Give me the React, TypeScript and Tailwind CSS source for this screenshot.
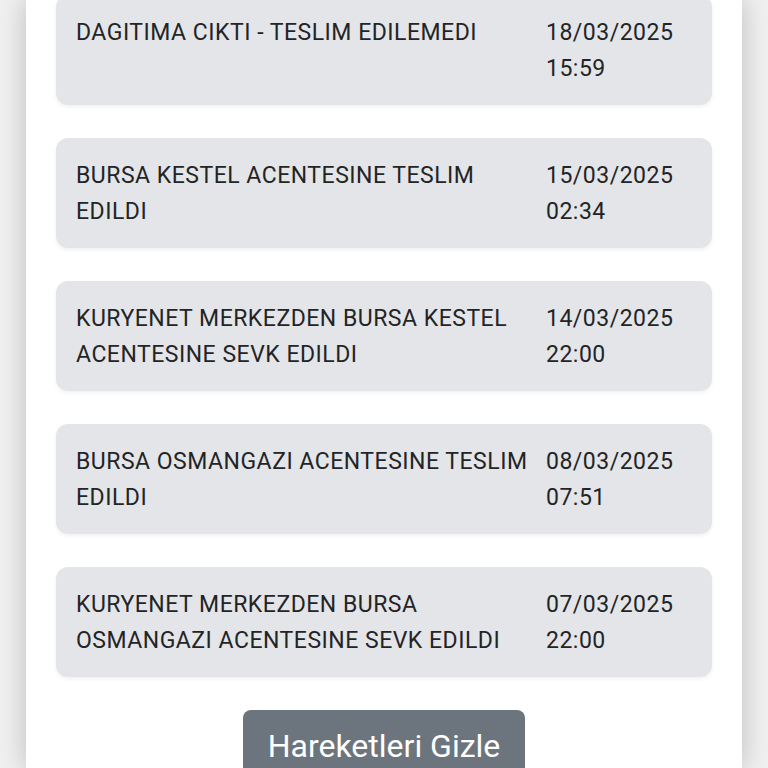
const events = [
  { text: 'DAGITIMA CIKTI - TESLIM EDILEMEDI', date: '18/03/2025', time: '15:59' },
  { text: 'BURSA KESTEL ACENTESINE TESLIM EDILDI', date: '15/03/2025', time: '02:34' },
  { text: 'KURYENET MERKEZDEN BURSA KESTEL ACENTESINE SEVK EDILDI', date: '14/03/2025', time: '22:00' },
  { text: 'BURSA OSMANGAZI ACENTESINE TESLIM EDILDI', date: '08/03/2025', time: '07:51' },
  { text: 'KURYENET MERKEZDEN BURSA OSMANGAZI ACENTESINE SEVK EDILDI', date: '07/03/2025', time: '22:00' },
];

export default function App() {
  return (
    <div
      className="w-[768px] h-[768px] overflow-hidden bg-[#f0f0f0] flex justify-center"
      style={{ fontFamily: 'Roboto, "Liberation Sans", sans-serif' }}
    >
      <div className="w-[716px] h-full bg-white shadow-[0_0_26px_rgba(0,0,0,0.22)] px-[30px]">
        <div className="-mt-[5px] flex flex-col gap-[33px]">
          {events.map((e, i) => (
            <div
              key={i}
              className="h-[110px] bg-[#e4e5e8] rounded-[12px] shadow-[0_2px_4px_rgba(0,0,0,0.06)] pl-[20px] pr-[36px] pt-[20px] pb-[18px] flex gap-[16px] text-[23px] tracking-[0.5px] leading-[36px] text-[#222426]"
            >
              <div className="flex-1">{e.text}</div>
              <div className="w-[130px] shrink-0">
                <div>{e.date}</div>
                <div>{e.time}</div>
              </div>
            </div>
          ))}
        </div>
        <div className="flex justify-center mt-[33px]">
          <button className="bg-[#6c757d] text-white rounded-[8px] px-[25px] py-[14px] text-[32px] leading-[44px]">
            Hareketleri Gizle
          </button>
        </div>
      </div>
    </div>
  );
}
